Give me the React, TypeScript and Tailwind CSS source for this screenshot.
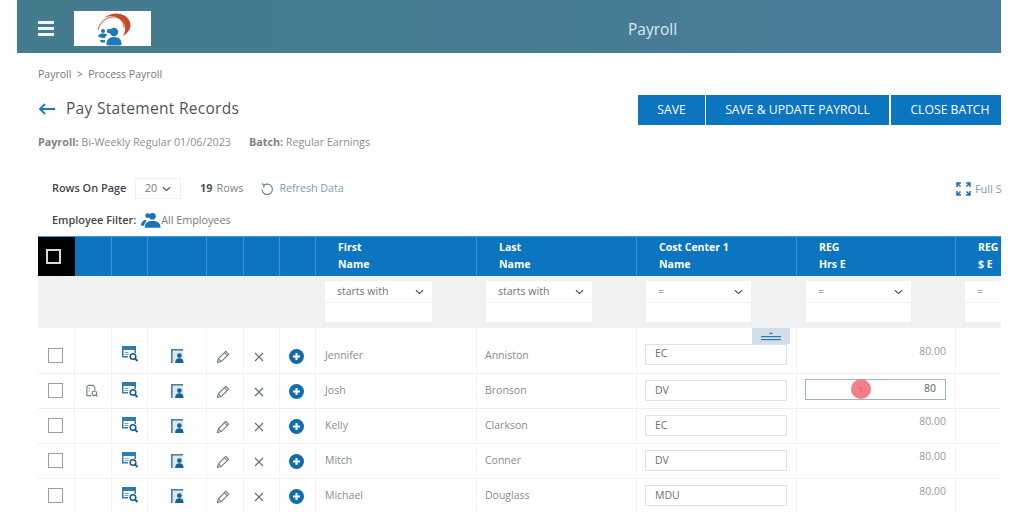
import React from "react";

const cols = "grid grid-cols-[37px_37px_36px_59px_37px_36px_36px_161px_160px_160px_159px_45px]";

function Chevron({ className = "" }: { className?: string }) {
  return (
    <svg viewBox="0 0 10 6" className={`w-[9px] h-[6px] ${className}`} fill="none" stroke="#4a5a66" strokeWidth="1.3">
      <path d="M1 1l4 3.600L9 1" />
    </svg>
  );
}

function Logo() {
  return (
    <svg viewBox="0 0 77 35" className="w-[77px] h-[35px]">
      <path d="M24 19C26 10 34 5 42 6C47 7 50 12 50 17" fill="none" stroke="#d98a62" strokeWidth="1.300" />
      <path d="M30 7C38 0 52 1 56 11C58 17 54 22 49 25C52 20 52 14 48 10C44 5 36 4 30 7Z" fill="#c44a2a" />
      <g fill="#1f78b8">
        <circle cx="29" cy="20" r="2" />
        <circle cx="35" cy="20" r="2.200" />
        <circle cx="40" cy="21" r="4.200" />
        <path d="M32.500 34c-.5-5 2.500-8 7.500-8s8 3 7.500 8c-2 .8-13 .8-15 0Z" />
        <path d="M24 25c1-2 3-2.500 5-2.500s3.500.5 4.500 1.500c-1.500 1-2.500 2-2.500 3c-3 0-6-.5-7-2Z" />
        <path d="M26 29h5v2.500h-3c-1 0-2-1-2-2.500Z" />
      </g>
    </svg>
  );
}

function IconCardSearch() {
  return (
    <svg viewBox="0 0 18 17" className="w-[18px] h-[17px]">
      <path d="M1 1h14v7h-1.500V5H2.500v6H7v1.500H1Z" fill="#2a7db4" />
      <rect x="1" y="1" width="14" height="3" fill="#2a7db4" />
      <rect x="3.500" y="7" width="4" height="1" fill="#6fa5c8" />
      <rect x="3.500" y="9" width="4" height="1" fill="#6fa5c8" />
      <circle cx="12" cy="11.500" r="2.800" fill="none" stroke="#175a85" strokeWidth="1.500" />
      <path d="M14 13.500l2.500 2.500" stroke="#175a85" strokeWidth="1.800" />
    </svg>
  );
}

function IconPerson() {
  return (
    <svg viewBox="0 0 16 17" className="w-[15px] h-[16px]">
      <path d="M1 1h13v2H3v13H1Z" fill="#4f7f99" />
      <rect x="3" y="3" width="11" height="13" fill="#dbe8f0" />
      <circle cx="10" cy="8" r="2.500" fill="#14639c" />
      <path d="M5.500 16c0-3.500 2-5 4.500-5s4.500 1.500 4.500 5Z" fill="#14639c" />
    </svg>
  );
}

function IconPencil() {
  return (
    <svg viewBox="0 0 16 16" className="w-[15px] h-[15px] mr-[4px]" fill="none" stroke="#64788a" strokeWidth="1.100">
      <path d="M10.500 2.500l3 3L5.500 13.500l-4 1 1-4Z" />
      <path d="M9 4l3 3" />
      <path d="M2.500 10.500l3 3" />
    </svg>
  );
}

function IconX() {
  return (
    <svg viewBox="0 0 10 10" className="w-[10px] h-[10px] mr-[6px]" fill="none" stroke="#5a7080" strokeWidth="1.100">
      <path d="M1 1l8 8M9 1l-8 8" />
    </svg>
  );
}

function IconPlus() {
  return (
    <svg viewBox="0 0 15 15" className="w-[15px] h-[15px] mr-[2px]">
      <circle cx="7.500" cy="7.500" r="7.500" fill="#0f6cad" />
      <path d="M7.500 4v7M4 7.500h7" stroke="#fff" strokeWidth="2" />
    </svg>
  );
}

function IconDocSearch() {
  return (
    <svg viewBox="0 0 14 15" className="w-[14px] h-[14px] mr-[2px]" fill="none" stroke="#71808a" strokeWidth="1.200">
      <path d="M3 1.500h5l2 2v3M3 1.500L1.500 3.500v9H6" />
      <path d="M4 4v1M4 7v1" />
      <circle cx="9.500" cy="10" r="2.500" />
      <path d="M11.500 12l1.500 1.500" />
    </svg>
  );
}

function FilterBox({ label, width }: { label: string; width: string }) {
  return (
    <div className={`${width} flex flex-col gap-[1px] shrink-0`}>
      <div className="h-[21px] bg-white flex items-center justify-between pl-3 pr-2 text-[10.500px] text-[#6b7378]">
        <span>{label}</span>
        <Chevron />
      </div>
      <div className="h-[19px] bg-white" />
    </div>
  );
}

const rows = [
  ["Jennifer", "Anniston", "EC"],
  ["Josh", "Bronson", "DV"],
  ["Kelly", "Clarkson", "EC"],
  ["Mitch", "Conner", "DV"],
  ["Michael", "Douglass", "MDU"],
];

const filters = [
  ["starts with", "w-[107px]"],
  ["starts with", "w-[106px]"],
  ["=", "w-[105px]"],
  ["=", "w-[105px]"],
  ["=", "w-[105px]"],
];

const cell = "border-r border-[#f3f3f3] flex items-center justify-center";

export default function App() {
  return (
    <div className="w-[1024px] h-[512px] overflow-hidden bg-white pl-[17px] pr-[23px] font-['Open_Sans',sans-serif] relative">
      <header className="h-[53px] bg-gradient-to-r from-[#447b8d] to-[#4a7d9b] flex items-center text-white relative">
        <div className="ml-[21px] mt-[3px] w-[16px] flex flex-col gap-[3px]">
          <div className="h-[3px] bg-[#f2f6f8]" />
          <div className="h-[3px] bg-[#f2f6f8]" />
          <div className="h-[3px] bg-[#f2f6f8]" />
        </div>
        <div className="ml-[20px] mt-[4px] w-[77px] h-[35px] bg-white"><Logo /></div>
        <div className="absolute left-[611px] top-[19px] text-[15.500px] leading-[20px] text-[#dfe9ee]">Payroll</div>
      </header>

      <div className="pl-[21px]">
        <div className="flex justify-between items-start">
          <div>
            <div className="pt-[14px] text-[10.500px] leading-[15px] text-[#737a7e]">Payroll &nbsp;&gt;&nbsp; Process Payroll</div>
            <div className="mt-[15px] flex items-center h-[24px]">
              <svg viewBox="0 0 17 12" className="w-[17px] h-[12px]" fill="none" stroke="#1b79b8" strokeWidth="1.800">
                <path d="M17 6H2M7 1L2 6l5 5" />
              </svg>
              <span className="ml-[11px] text-[15.500px] tracking-[0.3px] text-[#4e5559]">Pay Statement Records</span>
            </div>
          </div>
          <div className="mt-[42px] flex gap-[1px] h-[30px] text-white text-[12.200px] font-medium">
            <div className="w-[67px] bg-[#0c75c0] flex items-center justify-center pt-[1px]">SAVE</div>
            <div className="w-[183px] bg-[#0c75c0] flex items-center justify-center pt-[1px]">SAVE &amp; UPDATE PAYROLL</div>
            <div className="ml-[1px] w-[110px] bg-[#0c75c0] flex items-center justify-center pl-[8px] pt-[1px]">CLOSE BATCH</div>
          </div>
        </div>

        <div className="mt-[10px] text-[10.750px] leading-[15px] text-[#8a9195] flex">
          <span><b className="font-bold text-[#7b8286]">Payroll:</b> Bi-Weekly Regular 01/06/2023</span>
          <span className="ml-[18px]"><b className="font-bold text-[#7b8286]">Batch:</b> Regular Earnings</span>
        </div>

        <div className="mt-[28px] h-[21px] flex items-center text-[10.900px] relative">
          <span className="ml-[14px] w-[83px] font-semibold text-[#3f4649]">Rows On Page</span>
          <div className="w-[46px] h-[21px] border border-[#efefef] flex items-center justify-center gap-[5px] text-[#757c80]">
            <span>20</span>
            <Chevron />
          </div>
          <span className="ml-[19px] font-bold text-[#4d5458]">19</span>
          <span className="ml-[4px] text-[#7f868a]">Rows</span>
          <svg viewBox="0 0 14 14" className="ml-[17px] w-[14px] h-[14px]" fill="none" stroke="#5c7d90" strokeWidth="1.100">
            <path d="M4 3.200A5.200 5.200 0 1 1 2 7.500" />
            <path d="M2 1.500l2 1.700-.3 2.500" />
          </svg>
          <span className="ml-[5px] text-[10.700px] text-[#7e9cb0]">Refresh Data</span>
          <div className="absolute left-[918px] top-[3px] flex items-center gap-[4px] whitespace-nowrap">
            <svg viewBox="0 0 15 14" className="w-[15px] h-[14px]" fill="none" stroke="#1f6ea5" strokeWidth="1.500">
              <path d="M1 5V1h4M1 1l3.500 3.500M14 5V1h-4M14 1l-3.500 3.500M1 9v4h4M1 13l3.500-3.500M14 9v4h-4M14 13l-3.500-3.500" />
            </svg>
            <span className="text-[#7e9cb0]">Full S</span>
          </div>
        </div>

        <div className="mt-[13px] h-[16px] flex items-center text-[10.900px]">
          <span className="ml-[14px] font-semibold text-[#3f4649]">Employee Filter:</span>
          <svg viewBox="0 0 21 17" className="ml-[5px] w-[20px] h-[17px]" fill="#1874b5">
            <circle cx="7" cy="3.500" r="2.500" />
            <circle cx="12" cy="4" r="3.500" />
            <path d="M4 16c0-5 3-7 8-7s8.500 2 8.500 7Z" />
            <path d="M0 14c0-4 2-6 6-6l-3 6Z" />
          </svg>
          <span className="text-[10.750px] text-[#757c80]">All Employees</span>
        </div>

        <div className="mt-[8px] relative">
          <div className={`${cols} h-[40px] bg-[#0c75c0] border-t border-[#35a0e6] text-white text-[10.500px] font-bold leading-[17px]`}>
            <div className="bg-black flex items-center justify-center pr-[6px]">
              <div className="w-[15px] h-[15px] border-2 border-[#d8d8d8]" />
            </div>
            {[0, 1, 2, 3, 4, 5].map((i) => (
              <div key={i} className="border-r border-[#3d97d6]" />
            ))}
            {[
              ["First", "Name"],
              ["Last", "Name"],
              ["Cost Center 1", "Name"],
              ["REG", "Hrs E"],
              ["REG", "$ E"],
            ].map(([a, b], i) => (
              <div key={i} className="border-r border-[#3d97d6] pl-[22px] pt-[2px] whitespace-nowrap last:border-r-0 first:pl-[23px]">
                <div>{a}</div>
                <div>{b}</div>
              </div>
            ))}
          </div>

          <div className={`${cols} h-[52px] bg-[#f1f1f1]`}>
            <div className="col-span-7" />
            {filters.map(([l, w], i) => (
              <div key={i} className="pl-[9px] pt-[5px] overflow-hidden">
                <FilterBox label={l} width={w} />
              </div>
            ))}
          </div>

          {rows.map(([first, last, center], i) => (
            <div
              key={first}
              className={`${cols} ${i === 0 ? "h-[46px]" : "h-[35px] pb-[1px]"} border-b border-[#efefef] text-[10.500px] text-[#868c90]`}
            >
              <div className={`${cell} pr-[2px] ${i === 0 ? "pt-[10px]" : ""}`}>
                <div className="w-[15px] h-[15px] border border-[#99a0a4]" />
              </div>
              <div className={`${cell} ${i === 0 ? "pt-[10px]" : ""}`}>{i === 1 && <IconDocSearch />}</div>
              <div className={`${cell} ${i === 0 ? "pt-[6px]" : "pb-[3px]"}`}><IconCardSearch /></div>
              <div className={`${cell} ${i === 0 ? "pt-[11px]" : "pt-[1px]"}`}><IconPerson /></div>
              <div className={`${cell} ${i === 0 ? "pt-[12px]" : "pt-[2px]"}`}><IconPencil /></div>
              <div className={`${cell} ${i === 0 ? "pt-[12px]" : "pt-[2px]"}`}><IconX /></div>
              <div className={`${cell} ${i === 0 ? "pt-[11px]" : "pt-[1px]"}`}><IconPlus /></div>
              <div className={`border-r border-[#f3f3f3] flex items-center pl-[9px] ${i === 0 ? "pt-[10px]" : ""}`}>{first}</div>
              <div className={`border-r border-[#f3f3f3] flex items-center pl-[8px] ${i === 0 ? "pt-[10px]" : ""}`}>{last}</div>
              <div className={`border-r border-[#f3f3f3] flex items-center pl-[8px] ${i === 0 ? "pt-[7px]" : ""}`}>
                <div className="w-[142px] h-[21px] border border-[#dfe3e5] flex items-center pl-[9px] text-[#6a7175]">{center}</div>
              </div>
              <div className={`border-r border-[#f3f3f3] flex pl-[8px] pr-[9px] ${i === 1 ? "items-center pb-[3px]" : "items-start justify-end"} ${i === 0 ? "pt-[16px]" : i === 1 ? "" : "pt-[5px]"}`}>
                {i === 1 ? (
                  <div className="w-[141px] h-[21px] border border-[#9fb4bd] flex items-center justify-end pr-[9px] text-[#5a6165] relative">
                    80
                    <div className="absolute left-[45px] top-[-1px] w-[20px] h-[20px] rounded-full bg-[#f47f86] flex items-center justify-center text-[8px] text-[#d9565e]">1</div>
                  </div>
                ) : (
                  <span className="text-[#9a9c98]">80.00</span>
                )}
              </div>
              <div />
            </div>
          ))}

          <div className="absolute left-[714px] top-[92px] w-[38px] h-[16px] bg-[#d3dfe8] flex flex-col items-center justify-center">
            <svg viewBox="0 0 20 9" className="w-[20px] h-[9px]">
              <path d="M10 0l2 2H8Z" fill="#2a78ad" />
              <rect x="0" y="4" width="20" height="1.200" fill="#2a78ad" />
              <rect x="0" y="7" width="20" height="1.200" fill="#2a78ad" />
            </svg>
          </div>
        </div>
      </div>
    </div>
  );
}
